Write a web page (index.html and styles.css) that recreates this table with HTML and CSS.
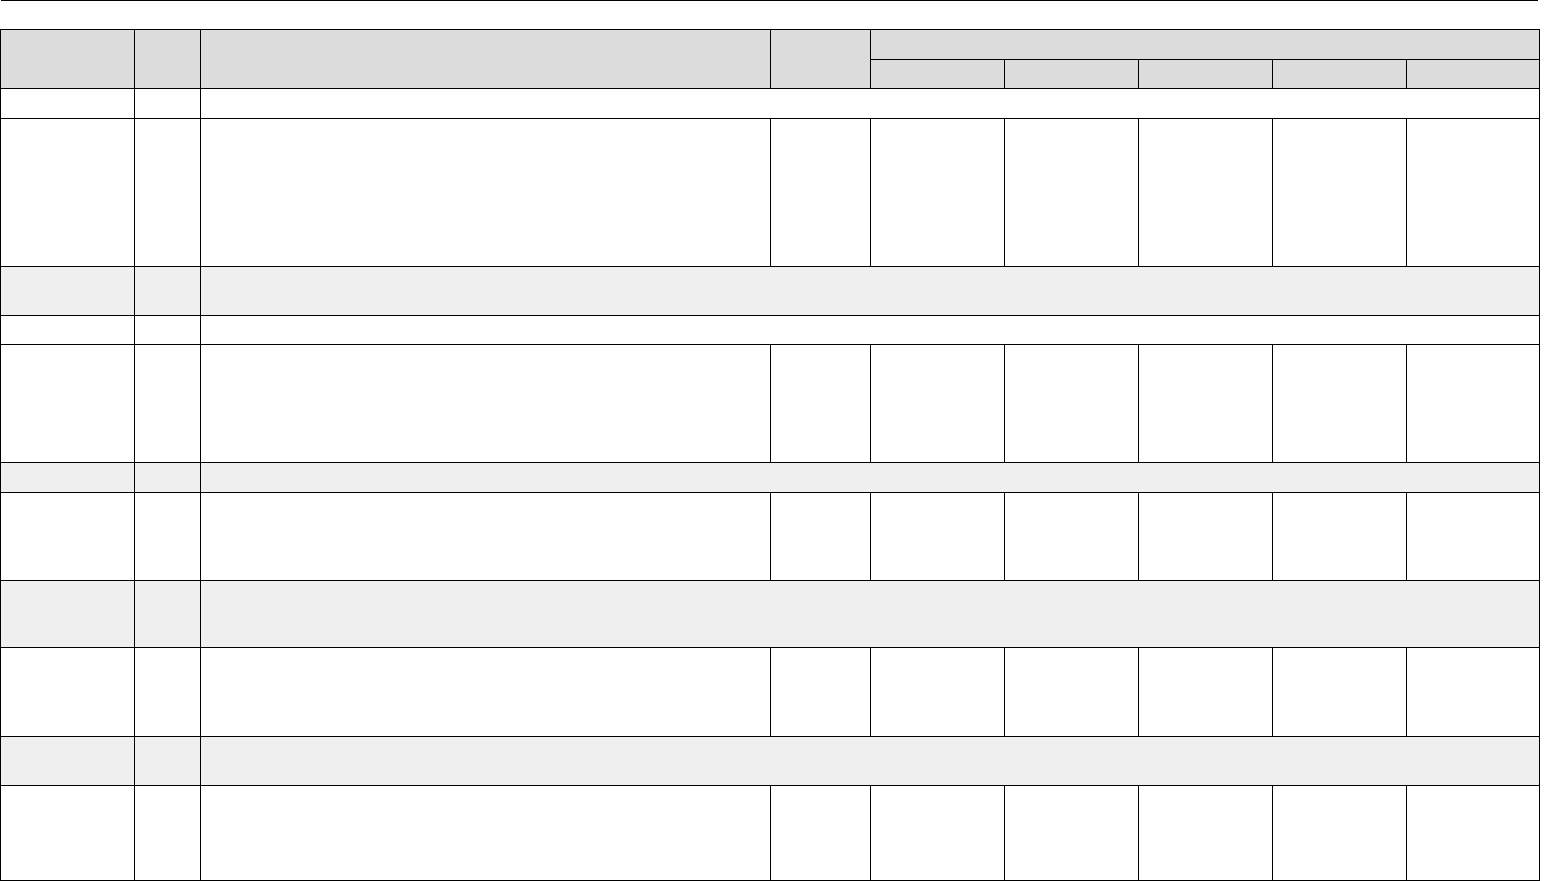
FILE: index.html
```html
<!DOCTYPE html>
<html>
<head>
<meta charset="utf-8">
<link rel="stylesheet" href="styles.css">
<title>Table</title>
</head>
<body>
<div class="rule"></div>
<div class="sheet">
  <div class="cell head h-c1"></div>
  <div class="cell head h-c2"></div>
  <div class="cell head h-c3"></div>
  <div class="cell head h-c4"></div>
  <div class="cell head h-group"></div>
  <div class="cell head"></div>
  <div class="cell head"></div>
  <div class="cell head"></div>
  <div class="cell head"></div>
  <div class="cell head"></div>

  <div class="cell"></div><div class="cell"></div><div class="cell span"></div>

  <div class="cell"></div><div class="cell"></div><div class="cell"></div><div class="cell"></div><div class="cell"></div><div class="cell"></div><div class="cell"></div><div class="cell"></div><div class="cell"></div>

  <div class="cell alt"></div><div class="cell alt"></div><div class="cell alt span"></div>

  <div class="cell"></div><div class="cell"></div><div class="cell span"></div>

  <div class="cell"></div><div class="cell"></div><div class="cell"></div><div class="cell"></div><div class="cell"></div><div class="cell"></div><div class="cell"></div><div class="cell"></div><div class="cell"></div>

  <div class="cell alt"></div><div class="cell alt"></div><div class="cell alt span"></div>

  <div class="cell"></div><div class="cell"></div><div class="cell"></div><div class="cell"></div><div class="cell"></div><div class="cell"></div><div class="cell"></div><div class="cell"></div><div class="cell"></div>

  <div class="cell alt"></div><div class="cell alt"></div><div class="cell alt span"></div>

  <div class="cell"></div><div class="cell"></div><div class="cell"></div><div class="cell"></div><div class="cell"></div><div class="cell"></div><div class="cell"></div><div class="cell"></div><div class="cell"></div>

  <div class="cell alt"></div><div class="cell alt"></div><div class="cell alt span"></div>

  <div class="cell"></div><div class="cell"></div><div class="cell"></div><div class="cell"></div><div class="cell"></div><div class="cell"></div><div class="cell"></div><div class="cell"></div><div class="cell"></div>
</div>
</body>
</html>
```
FILE: styles.css
```css
html, body {
  margin: 0;
  padding: 0;
  background: #fff;
  font-family: "Liberation Sans", Arial, sans-serif;
}

.rule {
  height: 0;
  margin: 0 6px 28px 1px;
  border-top: 1px solid #000;
}

.sheet {
  display: grid;
  width: 1538px;
  padding: 1px;
  gap: 1px;
  background: #000;
  grid-template-columns: 133px 65px 569px 99px 133px 133px 133px 133px 132px;
  grid-template-rows: 29px 28px 29px 147px 48px 28px 117px 29px 87px 66px 88px 48px 94px;
}

.cell {
  background: #fff;
}

.head {
  background: #dcdcdc;
}

.h-c1, .h-c2, .h-c3, .h-c4 {
  grid-row: span 2;
}

.h-group {
  grid-column: span 5;
}

.span {
  grid-column: 3 / -1;
}

.alt {
  background: #efefef;
}
```
